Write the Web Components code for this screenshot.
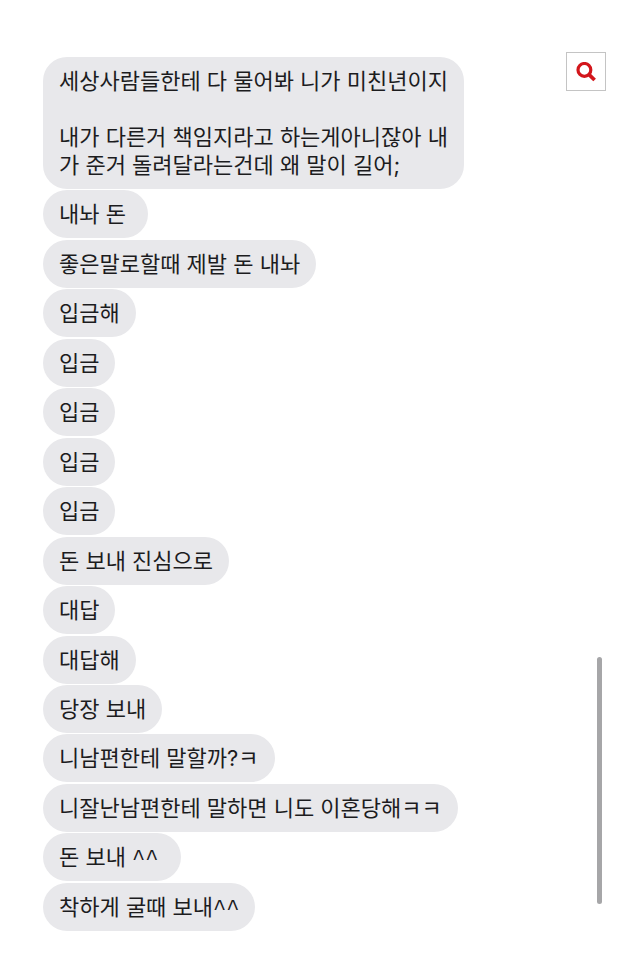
<!DOCTYPE html>
<html lang="ko">
<head>
<meta charset="utf-8">
<meta name="viewport" content="width=device-width, initial-scale=1">
<title>메시지</title>
<style>
body { margin: 0; background: #fff; }
</style>
</head>
<body>
<chat-page></chat-page>
<script>
class ChatBubble extends HTMLElement {
  connectedCallback() {
    if (this.shadowRoot) return;
    this.attachShadow({ mode: "open" }).innerHTML = `
      <style>
        :host { display: block; box-sizing: border-box; max-width: 100%;
          padding: 8px 16px 12px; border-radius: 24px; background: #e8e8eb; color: #1c1c1e; }
      </style><slot></slot>`;
  }
}
customElements.define("chat-bubble", ChatBubble);

class SearchButton extends HTMLElement {
  connectedCallback() {
    if (this.shadowRoot) return;
    this.attachShadow({ mode: "open" }).innerHTML = `
      <style>
        :host { display: block; }
        button { display: grid; place-items: center; box-sizing: border-box; width: 40px; height: 39px; padding: 0;
          border: 1px solid #c4c4c4; background: #fff; }
        svg { display: block; }
      </style>
      <button type="button" aria-label="검색">
        <svg width="20" height="20" viewBox="0 0 20 20" fill="none" stroke="#d3161b">
          <circle cx="8.4" cy="7.9" r="6.4" stroke-width="3.2"/>
          <path d="M12.8 12.4l5.8 5.6" stroke-width="3.8"/>
        </svg>
      </button>`;
  }
}
customElements.define("search-button", SearchButton);

class ScrollMark extends HTMLElement {
  connectedCallback() {
    if (this.shadowRoot) return;
    this.attachShadow({ mode: "open" }).innerHTML = `
      <style>
        :host { display: block; width: 5px; height: 247px; border-radius: 3px; background: #a6a6a8; }
      </style>`;
  }
}
customElements.define("scroll-mark", ScrollMark);

class ChatPage extends HTMLElement {
  connectedCallback() {
    if (this.shadowRoot) return;
    this.attachShadow({ mode: "open" }).innerHTML = `
      <style>
        :host { display: flex; justify-content: space-between; box-sizing: border-box; min-height: 100vh;
          padding: 52px 15px 36px 43px; font: 22px/28px "Noto Sans CJK KR", sans-serif; }
        main { display: flex; flex-direction: column; align-items: flex-start; justify-content: space-between;
          gap: 1px; padding-top: 5px; }
        aside { display: flex; flex-direction: column; justify-content: space-between; align-items: flex-end; flex: none; padding-bottom: 27px; }
        scroll-mark { margin-right: 4px; }
        .latin { font-family: Inter, sans-serif; line-height: 0; }
        .smile { font-family: "Liberation Mono", "Noto Sans CJK KR", sans-serif; line-height: 0; }
      </style>
      <main>
        <chat-bubble>세상사람들한테 다 물어봐 니가 미친년이지<br><br>내가 다른거 책임지라고 하는게아니잖아 내<br>가 준거 돌려달라는건데 왜 말이 길어<span class="latin">;</span></chat-bubble>
        <chat-bubble>내놔 돈&nbsp;</chat-bubble>
        <chat-bubble>좋은말로할때 제발 돈 내놔</chat-bubble>
        <chat-bubble>입금해</chat-bubble>
        <chat-bubble>입금</chat-bubble>
        <chat-bubble>입금</chat-bubble>
        <chat-bubble>입금</chat-bubble>
        <chat-bubble>입금</chat-bubble>
        <chat-bubble>돈 보내 진심으로</chat-bubble>
        <chat-bubble>대답</chat-bubble>
        <chat-bubble>대답해</chat-bubble>
        <chat-bubble>당장 보내</chat-bubble>
        <chat-bubble>니남편한테 말할까<span class="latin">?</span>ㅋ</chat-bubble>
        <chat-bubble>니잘난남편한테 말하면 니도 이혼당해ㅋㅋ</chat-bubble>
        <chat-bubble>돈 보내 <span class="smile">^^</span>&nbsp;</chat-bubble>
        <chat-bubble>착하게 굴때 보내<span class="smile">^^</span></chat-bubble>
      </main>
      <aside>
        <search-button></search-button>
        <scroll-mark></scroll-mark>
      </aside>`;
  }
}
customElements.define("chat-page", ChatPage);
</script>
</body>
</html>
